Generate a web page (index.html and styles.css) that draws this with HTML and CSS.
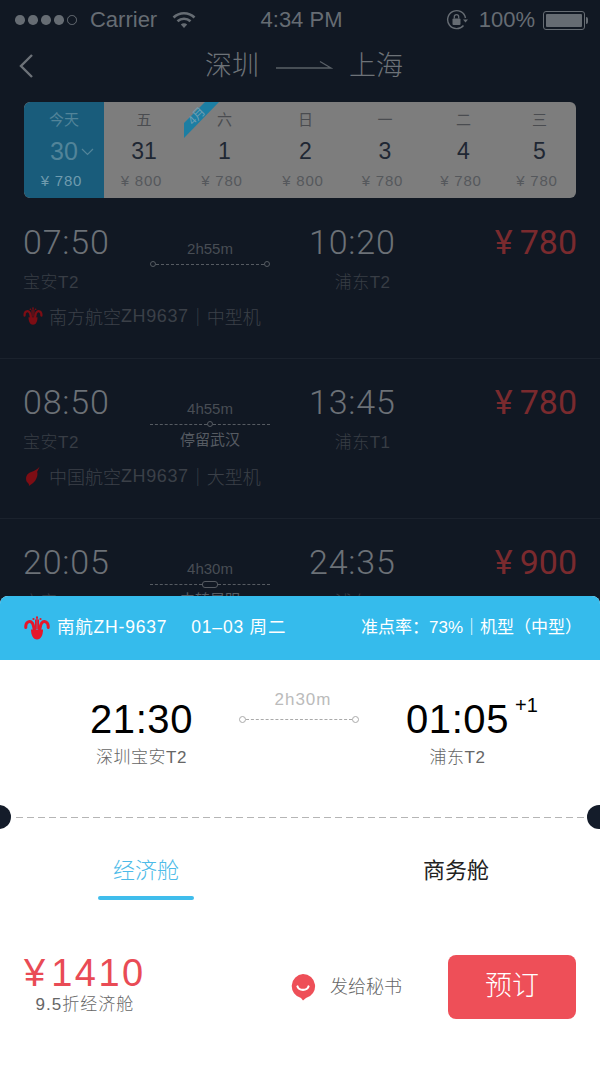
FILE: index.html
```html
<!DOCTYPE html>
<html lang="zh-CN">
<head>
  <meta charset="UTF-8">
  <title>深圳 - 上海</title>
  <meta name="viewport" content="width=device-width, initial-scale=1.0">
  <link rel="stylesheet" href="styles.css">
</head>
<body>

  <!-- airline marks, reused in the list and the sheet -->
  <svg class="defs" width="0" height="0">
    <symbol id="logo-south" viewBox="0 0 26 24">
      <path d="M1.800 11.500C1.300 6 6 3.800 8.500 7.300C10 9.800 9.500 12 10.500 14" fill="none" stroke="currentColor" stroke-width="3" stroke-linecap="round"/>
      <path d="M24.200 11.500C24.700 6 20 3.800 17.500 7.300C16 9.800 16.500 12 15.500 14" fill="none" stroke="currentColor" stroke-width="3" stroke-linecap="round"/>
      <path d="M11.600 3.500V13M14.400 3.500V13M13 1.500V13" fill="none" stroke="currentColor" stroke-width="1.200"/>
      <circle cx="9.500" cy="3" r="1.100" fill="currentColor"/>
      <circle cx="16.500" cy="3" r="1.100" fill="currentColor"/>
      <circle cx="13" cy="1.400" r="1.100" fill="currentColor"/>
      <path d="M7 13.500H19C19 19 17 23.500 13 23.500C9 23.500 7 19 7 13.500Z" fill="currentColor"/>
    </symbol>
    <symbol id="logo-air" viewBox="0 0 18 24">
      <path d="M17 0.500C16 3 15 5 14 7C15 10 14 14 12 17C10 20 7 22 4 24C5 22 3 21 1.500 19C0 16 0.500 11 3.500 9C6 7 8 7 10 6C13 4.500 15.500 2.500 17 0.500Z" fill="currentColor"/>
    </symbol>
  </svg>

  <div class="screen">

    <div class="status-bar">
      <div class="status-left">
        <span class="signal">
          <i></i><i></i><i></i><i></i><i class="off"></i>
        </span>
        <span class="carrier">Carrier</span>
        <svg class="wifi" width="24" height="18" viewBox="0 0 24 18">
          <path d="M1.500 6.500C7.500 0.800 16.500 0.800 22.500 6.500" fill="none" stroke="currentColor" stroke-width="2.600"/>
          <path d="M5.500 10.300C9.300 6.800 14.700 6.800 18.500 10.300" fill="none" stroke="currentColor" stroke-width="2.600"/>
          <path d="M8.800 13.500L12 17L15.200 13.500C13.300 11.800 10.700 11.800 8.800 13.500Z" fill="currentColor"/>
        </svg>
      </div>
      <div class="status-time">4:34 PM</div>
      <div class="status-right">
        <svg class="rotation-lock" width="22" height="22" viewBox="0 0 22 22">
          <path d="M17.500 16.500A9 9 0 1 1 19.500 9" fill="none" stroke="currentColor" stroke-width="1.400"/>
          <path d="M17 10.500H22L19.500 13.500Z" fill="currentColor"/>
          <rect x="6.500" y="9.500" width="8" height="6.500" rx="1" fill="currentColor"/>
          <path d="M8.300 9.500V7.800A2.200 2.200 0 0 1 12.700 7.800V9.500" fill="none" stroke="currentColor" stroke-width="1.300"/>
        </svg>
        <span class="battery-text">100%</span>
        <span class="battery"><span class="battery-level"></span></span>
      </div>
    </div>

    <div class="nav-bar">
      <svg class="back" width="16" height="26" viewBox="0 0 16 26">
        <path d="M14 2L3 13L14 24" fill="none" stroke="currentColor" stroke-width="2.400"/>
      </svg>
      <div class="nav-title">
        <span>深圳</span>
        <svg width="58" height="12" viewBox="0 0 58 12">
          <path d="M1 9H56L45 2.500" fill="none" stroke="currentColor" stroke-width="1.300"/>
        </svg>
        <span>上海</span>
      </div>
    </div>

    <div class="date-strip">
      <div class="date-cell today">
        <span class="weekday">今天</span>
        <span class="day">30<svg class="day-arrow" width="13" height="8" viewBox="0 0 13 8"><path d="M1 1L6.500 6.500L12 1" fill="none" stroke="currentColor" stroke-width="1.200"/></svg></span>
        <span class="fare">¥ 780</span>
      </div>
      <div class="date-cell">
        <span class="weekday">五</span>
        <span class="day">31</span>
        <span class="fare">¥ 800</span>
      </div>
      <div class="date-cell">
        <svg class="month-tag" width="36" height="36" viewBox="0 0 36 36">
          <path d="M0 36V21L21 0H35Z" fill="#1c7ea3"/>
          <text x="12.500" y="18" transform="rotate(-45 12.500 14)" text-anchor="middle">4月</text>
        </svg>
        <span class="weekday">六</span>
        <span class="day">1</span>
        <span class="fare">¥ 780</span>
      </div>
      <div class="date-cell">
        <span class="weekday">日</span>
        <span class="day">2</span>
        <span class="fare">¥ 800</span>
      </div>
      <div class="date-cell">
        <span class="weekday">一</span>
        <span class="day">3</span>
        <span class="fare">¥ 780</span>
      </div>
      <div class="date-cell">
        <span class="weekday">二</span>
        <span class="day">4</span>
        <span class="fare">¥ 780</span>
      </div>
      <div class="date-cell">
        <span class="weekday">三</span>
        <span class="day">5</span>
        <span class="fare">¥ 780</span>
      </div>
    </div>

    <div class="flight">
      <div class="stop-depart">
        <div class="flight-time">07:50</div>
        <div class="flight-port">宝安T2</div>
      </div>
      <div class="flight-mid">
        <div class="flight-span">2h55m</div>
        <div class="track"><i class="dot"></i><i class="dash"></i><i class="dot"></i></div>
      </div>
      <div class="stop-arrive">
        <div class="flight-time">10:20</div>
        <div class="flight-port">浦东T2</div>
      </div>
      <div class="flight-price">¥<span>780</span></div>
      <div class="flight-carrier">
        <svg class="carrier-logo" width="20" height="18"><use href="#logo-south"/></svg>
        南方航空<span class="flight-no">ZH9637</span>｜中型机
      </div>
    </div>

    <div class="flight">
      <div class="stop-depart">
        <div class="flight-time">08:50</div>
        <div class="flight-port">宝安T2</div>
      </div>
      <div class="flight-mid">
        <div class="flight-span">4h55m</div>
        <div class="track"><i class="dash"></i><i class="dot"></i><i class="dash"></i></div>
        <div class="flight-stop">停留武汉</div>
      </div>
      <div class="stop-arrive">
        <div class="flight-time">13:45</div>
        <div class="flight-port">浦东T1</div>
      </div>
      <div class="flight-price">¥<span>780</span></div>
      <div class="flight-carrier">
        <svg class="carrier-logo" width="20" height="20"><use href="#logo-air"/></svg>
        中国航空<span class="flight-no">ZH9637</span>｜大型机
      </div>
    </div>

    <div class="flight">
      <div class="stop-depart">
        <div class="flight-time">20:05</div>
        <div class="flight-port">宝安T2</div>
      </div>
      <div class="flight-mid">
        <div class="flight-span">4h30m</div>
        <div class="track"><i class="dash"></i><i class="pill"></i><i class="dash"></i></div>
        <div class="flight-stop">中转昆明</div>
      </div>
      <div class="stop-arrive">
        <div class="flight-time">24:35</div>
        <div class="flight-port">浦东T2</div>
      </div>
      <div class="flight-price">¥<span>900</span></div>
    </div>

    <!-- detail sheet, slides over the list -->
    <div class="sheet">
      <div class="sheet-head">
        <svg class="sheet-logo" width="26" height="24"><use href="#logo-south"/></svg>
        <span class="sheet-no">南航ZH-9637</span>
        <span class="sheet-date">01–03 周二</span>
        <span class="sheet-rate">准点率：73%｜机型（中型）</span>
      </div>

      <div class="leg">
        <div class="leg-end">
          <div class="leg-time">21:30</div>
          <div class="leg-port">深圳宝安T2</div>
        </div>
        <div class="leg-mid">
          <div class="leg-span">2h30m</div>
          <div class="track"><i class="dot"></i><i class="dash"></i><i class="dot"></i></div>
        </div>
        <div class="leg-end">
          <div class="leg-time">01:05<sup class="next-day">+1</sup></div>
          <div class="leg-port">浦东T2</div>
        </div>
      </div>

      <div class="tear"></div>

      <div class="cabins">
        <div class="cabin active">经济舱</div>
        <div class="cabin">商务舱</div>
      </div>

      <div class="buy">
        <div class="buy-price">
          <div class="buy-amount">¥<span>1410</span></div>
          <div class="buy-note">9.5折经济舱</div>
        </div>
        <div class="send">
          <svg width="26" height="28" viewBox="0 0 26 28">
            <path d="M13 1A12.200 12.200 0 0 1 16 25L13 27.500L11 25A12.200 12.200 0 0 1 13 1Z" fill="#ee4f58"/>
            <path d="M7.500 13.500C9 18 17 18 18.500 13.500" fill="none" stroke="#fff" stroke-width="2.200" stroke-linecap="round"/>
          </svg>
          <span>发给秘书</span>
        </div>
        <button class="book">预订</button>
      </div>
    </div>

  </div>

</body>
</html>
```

FILE: styles.css
```css
* { box-sizing: border-box; margin: 0; padding: 0; }
body {
  font-family: "Liberation Sans", "Noto Sans CJK SC", sans-serif;
  background-color: #111823;
}
i { display: block; }
.defs { position: absolute; }

.screen {
  position: relative;
  width: 600px;
  height: 1067px;
  overflow: hidden;
  background-color: #111823;
}

/* status bar */
.status-bar {
  display: grid;
  grid-template-columns: 1fr auto 1fr;
  align-items: center;
  height: 40px;
  padding: 0 12px 0 15px;
  color: #666c73;
  font-size: 22px;
}
.status-left, .status-right {
  display: flex;
  align-items: center;
}
.status-right { justify-content: flex-end; }
.signal {
  display: flex;
  gap: 3.500px;
  margin-right: 13px;
}
.signal i {
  width: 9.600px;
  height: 9.600px;
  border-radius: 50%;
  background: #666c73;
}
.signal i.off {
  background: none;
  border: 1px solid #666c73;
}
.carrier { margin-right: 15px; }
.rotation-lock { margin-right: 11px; }
.battery-text { margin-right: 8px; }
.battery {
  position: relative;
  width: 42px;
  height: 19px;
  margin-right: 3px;
  padding: 2px;
  border: 1px solid #666c73;
  border-radius: 3px;
}
.battery::after {
  content: "";
  position: absolute;
  right: -4px;
  top: 5px;
  width: 2px;
  height: 7px;
  border-radius: 0 2px 2px 0;
  background: #666c73;
}
.battery-level {
  display: block;
  height: 100%;
  border-radius: 1px;
  background: #666c73;
}

/* nav */
.nav-bar {
  position: relative;
  height: 50px;
  color: #6d7278;
}
.back {
  position: absolute;
  left: 18px;
  top: 13px;
}
.nav-title {
  display: flex;
  align-items: center;
  justify-content: center;
  gap: 16px;
  height: 50px;
  padding: 0 0 4px 8px;
  font-size: 27px;
  font-weight: 300;
}
.nav-title svg { color: #5a6067; margin-top: 3px; }

/* dates */
.date-strip {
  display: grid;
  grid-template-columns: 80px 80px 81px 81px 78px 79px 73px;
  height: 96px;
  margin: 12px 24px 1px;
  border-radius: 6px;
  background: #7d7d7d;
  overflow: hidden;
}
.date-cell {
  position: relative;
  display: flex;
  flex-direction: column;
  align-items: center;
  padding-top: 7px;
}
.weekday {
  height: 22px;
  line-height: 22px;
  font-size: 15px;
  color: #4a4c50;
}
.day {
  position: relative;
  height: 40px;
  line-height: 40px;
  font-size: 23px;
  color: #1f2733;
}
.fare {
  height: 24px;
  line-height: 20px;
  margin-left: -5px;
  font-size: 15px;
  letter-spacing: 0.800px;
  color: #55585c;
}
.date-cell.today {
  background: #195c7b;
  border-radius: 6px 0 0 6px;
}
.today .weekday { color: #528499; }
.today .day { color: #528499; font-size: 25px; }
.today .fare { color: #6f9bae; }
.day-arrow {
  position: absolute;
  left: 100%;
  top: 17px;
  margin-left: 3px;
}
.month-tag {
  position: absolute;
  left: 0;
  top: 0;
}
.month-tag text {
  font-size: 12px;
  fill: #6d9db2;
}

/* flight rows */
.flight {
  display: grid;
  grid-template-columns: 127px 120px 1fr auto;
  grid-template-rows: 81px auto;
  height: 160px;
  padding: 24px 23px 0;
  border-bottom: 1px solid #1b222d;
}
.flight-time {
  height: 38px;
  line-height: 38px;
  font-family: Roboto, sans-serif;
  font-weight: 300;
  font-size: 34px;
  letter-spacing: 0.800px;
  color: #6c7177;
}
.flight-port {
  height: 24px;
  line-height: 24px;
  margin-top: 10px;
  font-size: 17px;
  font-weight: 300;
  letter-spacing: 0.500px;
  color: #383d45;
}
.stop-arrive {
  display: grid;
  align-content: start;
  justify-items: end;
  justify-self: start;
  margin-left: 39px;
}
.stop-arrive .flight-port { margin-right: 5px; }
.flight-mid { padding-top: 16px; }
.flight-span {
  height: 20px;
  line-height: 20px;
  text-align: center;
  font-size: 15px;
  color: #484d54;
}
.flight-stop {
  height: 20px;
  line-height: 20px;
  margin-top: 2px;
  text-align: center;
  font-size: 15px;
  color: #565b62;
}
.flight-price {
  display: flex;
  align-items: center;
  gap: 7px;
  height: 38px;
  font-family: Roboto, sans-serif;
  font-size: 34px;
  color: #7a2a2e;
}
.flight-carrier {
  grid-column: 1 / -1;
  display: flex;
  align-items: center;
  height: 24px;
  font-size: 18px;
  font-weight: 300;
  white-space: nowrap;
  color: #3b4048;
}
.flight-no { letter-spacing: 0.600px; }
.carrier-logo {
  margin-right: 6px;
  color: #7d0d14;
  flex: none;
}

/* dashed route line */
.track {
  display: flex;
  align-items: center;
  height: 8px;
  margin-top: 1px;
  color: #565b62;
}
.dot {
  flex: none;
  width: 6px;
  height: 6px;
  border: 1px solid currentColor;
  border-radius: 50%;
}
.pill {
  flex: none;
  width: 16px;
  height: 7px;
  border: 1px solid currentColor;
  border-radius: 3px;
}
.dash {
  flex: 1;
  border-top: 1px dashed currentColor;
}

/* detail sheet */
.sheet {
  position: absolute;
  left: 0;
  right: 0;
  bottom: 0;
  height: 471px;
  border-radius: 8px 8px 0 0;
  background: #fff;
  overflow: hidden;
}
.sheet-head {
  display: flex;
  align-items: center;
  height: 64px;
  padding: 0 18px 5px 24px;
  background: #35bbec;
  color: #fff;
  font-size: 17.500px;
  letter-spacing: 0.800px;
  white-space: nowrap;
}
.sheet-logo {
  flex: none;
  margin: 4px 7px 0 0;
  color: #e5172b;
}
.sheet-no { margin-right: 24px; }
.sheet-rate { margin-left: auto; font-size: 17px; letter-spacing: 0; }

.leg {
  display: grid;
  grid-template-columns: 195px 120px 197px;
  height: 129px;
  padding: 36px 0 0 44px;
  text-align: center;
}
.leg-time {
  position: relative;
  display: inline-block;
  height: 46px;
  line-height: 46px;
  font-size: 40px;
  letter-spacing: 0.600px;
  color: #000;
}
.next-day {
  position: absolute;
  left: 100%;
  top: -1px;
  margin-left: 6px;
  font-size: 20px;
  line-height: 20px;
  letter-spacing: 0;
}
.leg-port {
  height: 24px;
  line-height: 24px;
  margin-top: 4px;
  font-size: 17px;
  font-weight: 300;
  letter-spacing: 0.500px;
  color: #666;
}
.leg-mid { margin-top: -8px; }
.leg-span {
  height: 24px;
  padding-left: 8px;
  line-height: 24px;
  font-size: 17px;
  letter-spacing: 1px;
  color: #bbb;
}
.leg-mid .track {
  margin-top: 3px;
  color: #aaa;
}
.leg-mid .dot {
  width: 7px;
  height: 7px;
}

/* ticket tear line with punched notches */
.tear {
  position: relative;
  height: 1px;
  margin: 28px 16px 0;
  background: repeating-linear-gradient(90deg, #b5b5b5 0 7px, transparent 7px 11px);
}
.tear::before, .tear::after {
  content: "";
  position: absolute;
  top: -12px;
  width: 24px;
  height: 24px;
  border-radius: 50%;
  background: #141c2a;
}
.tear::before { left: -29px; }
.tear::after { right: -27px; }

.cabins {
  display: flex;
  height: 83px;
  padding: 35px 0 0 98px;
}
.cabin {
  position: relative;
  width: 96px;
  height: 47px;
  text-align: center;
  font-size: 22px;
  font-weight: 300;
  line-height: 36px;
  color: #222;
}
.cabin + .cabin { margin-left: 229px; width: 66px; font-weight: 400; }
.cabin.active { color: #4dbbe8; }
.cabin.active::after {
  content: "";
  position: absolute;
  left: 0;
  right: 0;
  bottom: 0;
  height: 4px;
  border-radius: 2px;
  background: #3fbdec;
}

.buy {
  display: flex;
  align-items: center;
  height: 64px;
  margin-top: 54px;
  padding: 0 24px;
}
.buy-price {
  display: flex;
  flex-direction: column;
  align-items: center;
  padding-bottom: 6px;
}
.buy-amount {
  display: flex;
  align-items: center;
  gap: 6px;
  height: 40px;
  font-size: 38px;
  color: #e94b55;
}
.buy-amount span { letter-spacing: 2.500px; }
.buy-note {
  height: 20px;
  margin-top: 2px;
  line-height: 20px;
  font-size: 17px;
  font-weight: 300;
  letter-spacing: 1px;
  color: #666;
}
.send {
  display: flex;
  align-items: center;
  gap: 14px;
  margin-left: auto;
  margin-right: 46px;
  font-size: 18px;
  font-weight: 300;
  color: #666;
}
.send span { margin-bottom: 5px; }
.book {
  width: 128px;
  height: 64px;
  padding-bottom: 7px;
  border: none;
  border-radius: 8px;
  background: #ee4f58;
  color: #fff;
  font-family: inherit;
  font-size: 27px;
  font-weight: 300;
}
```
